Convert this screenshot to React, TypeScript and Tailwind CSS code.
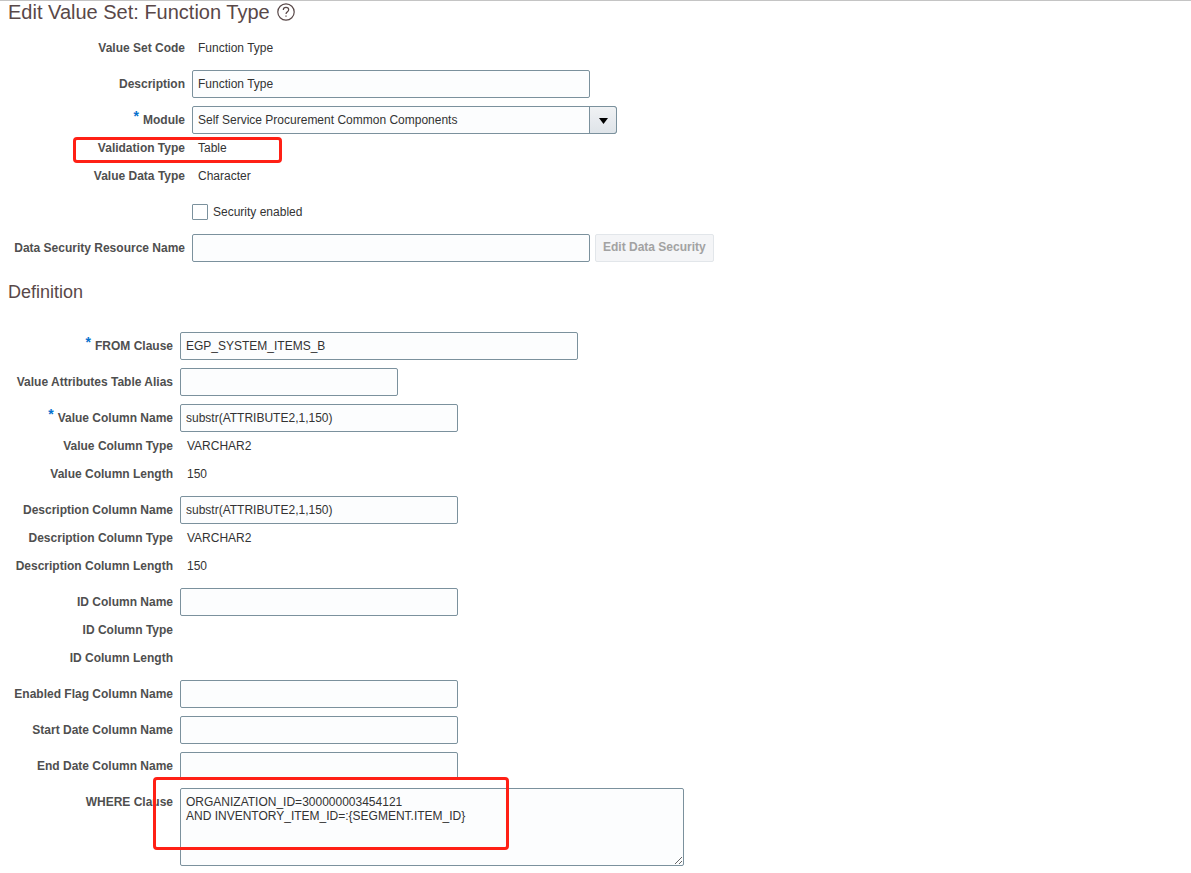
import { useState } from 'react';
import type { ReactNode } from 'react';

const inputClass =
  'h-7 rounded-[2px] border border-[#7b919d] bg-[#fcfdfe] px-[5px] text-xs text-[#333333] outline-none';

type RowProps = {
  label?: string;
  htmlFor?: string;
  required?: boolean;
  wide?: boolean;
  spaced?: boolean;
  children?: ReactNode;
};

function Row({ label, htmlFor, required, wide, spaced, children }: RowProps) {
  const labelContent = (
    <>
      {required && <span className="mr-1 align-[3px] text-sm leading-none text-[#0572ce]">*</span>}
      {label}
    </>
  );

  return (
    <div className={`relative flex items-start gap-[7px] ${spaced ? 'mt-2' : ''}`}>
      <div
        className={`shrink-0 text-right font-bold leading-7 text-[#4f4f4f] whitespace-nowrap ${
          wide ? 'w-[185px]' : 'w-[173px]'
        }`}
      >
        {htmlFor ? <label htmlFor={htmlFor}>{labelContent}</label> : labelContent}
      </div>
      <div className="min-h-7 flex-1 flex items-center gap-[5px]">{children}</div>
    </div>
  );
}

type FieldProps = {
  id: string;
  label: string;
  value?: string;
  width: string;
  required?: boolean;
};

function Field({ id, label, value = '', width, required }: FieldProps) {
  return (
    <Row label={label} htmlFor={id} required={required} spaced>
      <input id={id} type="text" defaultValue={value} className={`${inputClass} ${width}`} />
    </Row>
  );
}

function ReadOnly({ label, value }: { label: string; value?: string }) {
  return (
    <Row label={label}>
      <span className="pl-[7px]">{value}</span>
    </Row>
  );
}

export default function App() {
  const [secured, setSecured] = useState(false);

  return (
    <main className="border-t border-[#c4c4c4] bg-white pb-[7px] font-['Liberation_Sans',Arial,sans-serif] text-xs text-[#333333]">
      {/* Header */}
      <div className="flex items-center gap-[7px] px-2">
        <h1 className="text-xl leading-[22px] text-[#594848]">Edit Value Set: Function Type</h1>
        <button type="button" aria-label="Help">
          <svg width="18" height="18" viewBox="0 0 18 18" fill="none" stroke="#594848" strokeWidth="1.2">
            <circle cx="9" cy="9" r="8.2" />
            <path d="M6.3 7.1c0-1.7 1.1-2.7 2.7-2.7s2.7 1 2.7 2.4c0 1.9-2.7 2-2.7 4.2" />
            <path d="M9 12.4v1.4" />
          </svg>
        </button>
      </div>

      <section className="pt-[11px]">
        <Row label="Value Set Code" wide>
          <span className="pl-[6px]">Function Type</span>
        </Row>
        <Row label="Description" htmlFor="description" wide spaced>
          <input
            id="description"
            type="text"
            defaultValue="Function Type"
            className={`${inputClass} w-[398px]`}
          />
        </Row>
        <Row label="Module" htmlFor="module" required wide spaced>
          <div className="relative w-[425px]">
            <select id="module" className={`${inputClass} block w-full appearance-none rounded-r-[3px]`}>
              <option>Self Service Procurement Common Components</option>
            </select>
            <span className="pointer-events-none absolute inset-y-0 right-0 flex w-7 items-center justify-center rounded-r-[3px] border border-[#7b919d] bg-linear-to-b from-[#f0f2f4] to-[#dfe4e9]">
              <svg width="9" height="6" viewBox="0 0 9 6" className="mt-[2px]">
                <path d="M0 0h9L4.5 6z" fill="#000" />
              </svg>
            </span>
          </div>
        </Row>
        <Row label="Validation Type" wide>
          <span className="pl-[6px]">Table</span>
          <div className="pointer-events-none absolute left-[73px] top-[3px] h-[26px] w-[209px] rounded-[4px] border-3 border-[#ff2015]" />
        </Row>
        <Row label="Value Data Type" wide>
          <span className="pl-[6px]">Character</span>
        </Row>
        <Row wide spaced>
          <input
            id="secured"
            type="checkbox"
            checked={secured}
            onChange={(e) => setSecured(e.target.checked)}
            className="size-4 appearance-none rounded-[1px] border border-[#7b919d] bg-white checked:bg-[#0572ce]"
          />
          <label htmlFor="secured">Security enabled</label>
        </Row>
        <Row label="Data Security Resource Name" htmlFor="resource" wide spaced>
          <input id="resource" type="text" className={`${inputClass} w-[398px]`} />
          <button
            type="button"
            disabled
            className="h-7 rounded-[2px] border border-[#e2e6ea] bg-[#f4f5f7] px-[7px] pb-[2px] font-bold text-[#a2a2a2]"
          >
            Edit Data Security
          </button>
        </Row>
      </section>

      {/* Definition */}
      <section className="pt-[18px]">
        <h2 className="px-2 pb-5 text-lg leading-6 text-[#594848]">Definition</h2>
        <Field id="from" label="FROM Clause" value="EGP_SYSTEM_ITEMS_B" width="w-[398px]" required />
        <Field id="alias" label="Value Attributes Table Alias" width="w-[218px]" />
        <Field
          id="value-column"
          label="Value Column Name"
          value="substr(ATTRIBUTE2,1,150)"
          width="w-[278px]"
          required
        />
        <ReadOnly label="Value Column Type" value="VARCHAR2" />
        <ReadOnly label="Value Column Length" value="150" />
        <Field
          id="description-column"
          label="Description Column Name"
          value="substr(ATTRIBUTE2,1,150)"
          width="w-[278px]"
        />
        <ReadOnly label="Description Column Type" value="VARCHAR2" />
        <ReadOnly label="Description Column Length" value="150" />
        <Field id="id-column" label="ID Column Name" width="w-[278px]" />
        <ReadOnly label="ID Column Type" />
        <ReadOnly label="ID Column Length" />
        <Field id="enabled-column" label="Enabled Flag Column Name" width="w-[278px]" />
        <Field id="start-column" label="Start Date Column Name" width="w-[278px]" />
        <Field id="end-column" label="End Date Column Name" width="w-[278px]" />
        <Row label="WHERE Clause" htmlFor="where" spaced>
          <textarea
            id="where"
            defaultValue={'ORGANIZATION_ID=300000003454121\nAND INVENTORY_ITEM_ID=:{SEGMENT.ITEM_ID}'}
            className="block h-[78px] w-[504px] resize rounded-[2px] border border-[#7b919d] bg-[#fcfdfe] px-[5px] py-[6px] text-xs leading-[14px] text-[#333333] outline-none"
          />
          <div className="pointer-events-none absolute -top-[11px] left-[153px] h-[73px] w-[356px] rounded-[4px] border-3 border-[#ff2015]" />
        </Row>
      </section>
    </main>
  );
}
